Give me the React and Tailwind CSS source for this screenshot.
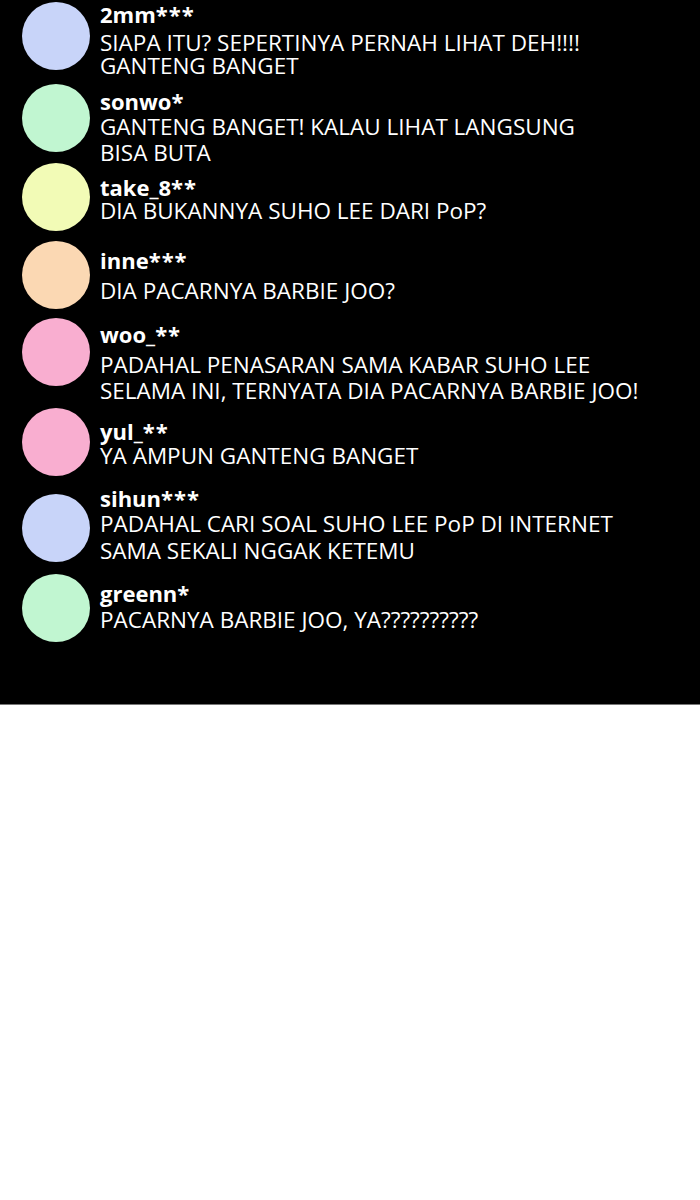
const comments = [
  {
    name: "2mm",
    stars: "***",
    lines: ["SIAPA ITU? SEPERTINYA PERNAH LIHAT DEH!!!!", "GANTENG BANGET"],
    color: "bg-[#c8d4f9]",
    row: "h-[82px]",
    avatar: "mt-0",
    text: "mt-0",
    gap: "mt-[5px]",
    leading: "leading-[23px]",
  },
  {
    name: "sonwo",
    stars: "*",
    lines: ["GANTENG BANGET! KALAU LIHAT LANGSUNG", "BISA BUTA"],
    color: "bg-[#c1f6d1]",
    row: "h-[79px]",
    avatar: "mt-0",
    text: "mt-[5px]",
    gap: "mt-[1px]",
    leading: "leading-[26px]",
  },
  {
    name: "take_8",
    stars: "**",
    lines: ["DIA BUKANNYA SUHO LEE DARI PoP?"],
    color: "bg-[#f2fbb6]",
    row: "h-[78px]",
    avatar: "mt-0",
    text: "mt-[12px]",
    gap: "mt-0",
    leading: "leading-[24px]",
  },
  {
    name: "inne",
    stars: "***",
    lines: ["DIA PACARNYA BARBIE JOO?"],
    color: "bg-[#fbd8b3]",
    row: "h-[77px]",
    avatar: "mt-0",
    text: "mt-[7px]",
    gap: "mt-[7px]",
    leading: "leading-[24px]",
  },
  {
    name: "woo_",
    stars: "**",
    lines: [
      "PADAHAL PENASARAN SAMA KABAR SUHO LEE",
      "SELAMA INI, TERNYATA DIA PACARNYA BARBIE JOO!",
    ],
    color: "bg-[#f9aed0]",
    row: "h-[90px]",
    avatar: "mt-0",
    text: "mt-[4px]",
    gap: "mt-[6px]",
    leading: "leading-[26px]",
  },
  {
    name: "yul_",
    stars: "**",
    lines: ["YA AMPUN GANTENG BANGET"],
    color: "bg-[#f9aed0]",
    row: "h-[78px]",
    avatar: "mt-0",
    text: "mt-[11px]",
    gap: "mt-[1px]",
    leading: "leading-[24px]",
  },
  {
    name: "sihun",
    stars: "***",
    lines: [
      "PADAHAL CARI SOAL SUHO LEE PoP DI INTERNET",
      "SAMA SEKALI NGGAK KETEMU",
    ],
    color: "bg-[#c8d4f9]",
    row: "h-[88px]",
    avatar: "mt-[8px]",
    text: "mt-0",
    gap: "mt-0",
    leading: "leading-[27px]",
  },
  {
    name: "greenn",
    stars: "*",
    lines: ["PACARNYA BARBIE JOO, YA??????????"],
    color: "bg-[#c1f6d1]",
    row: "h-[130px]",
    avatar: "mt-0",
    text: "mt-[7px]",
    gap: "mt-[3px]",
    leading: "leading-[24px]",
  },
];

function CommentRow({ item }) {
  return (
    <div className={`flex items-start gap-[10px] pl-[22px] ${item.row}`}>
      <div
        className={`h-[68px] w-[68px] shrink-0 rounded-full ${item.color} ${item.avatar}`}
      />
      <div className={`flex flex-col ${item.text}`}>
        <div className="text-[22px] font-bold leading-[24px]">
          {item.name}
          <span className="tracking-[1px]">{item.stars}</span>
        </div>
        <p className={`text-[22.5px] ${item.leading} ${item.gap}`}>
          {item.lines.map((line, i) => (
            <span key={line}>
              {i > 0 && <br />}
              {line}
            </span>
          ))}
        </p>
      </div>
    </div>
  );
}

export default function App() {
  return (
    <main className="min-h-[1200px] w-[700px] bg-white font-['Open_Sans','Noto_Sans',sans-serif]">
      {/* comment panel */}
      <section className="h-[705px] border-b border-[#777777] bg-black pt-[2px] text-white">
        {comments.map((item) => (
          <CommentRow key={item.name} item={item} />
        ))}
      </section>
    </main>
  );
}
